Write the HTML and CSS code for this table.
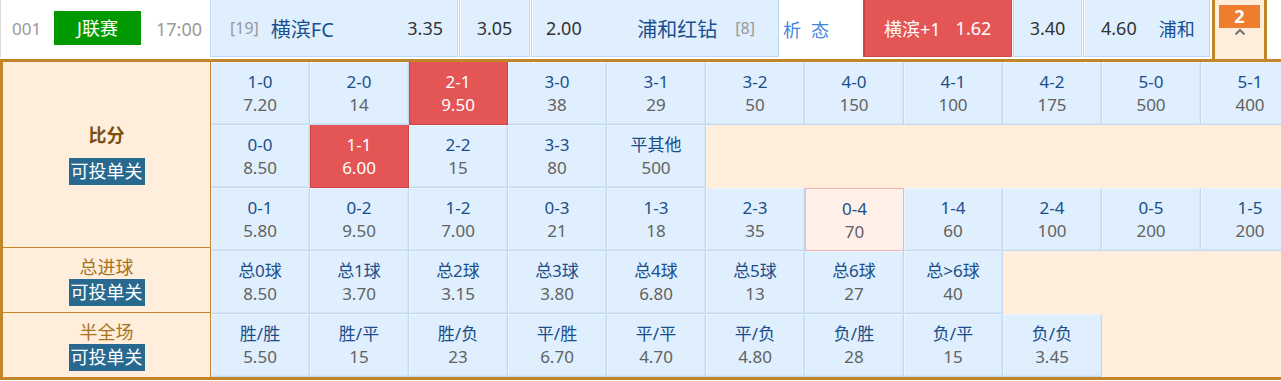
FILE: index.html
```html
<!DOCTYPE html>
<html lang="zh-CN">
<head>
<meta charset="utf-8">
<title>J联赛 横滨FC vs 浦和红钻</title>
<link rel="stylesheet" href="styles.css">
</head>
<body>
<div class="page">
  <div class="head">
    <div class="info">
      <span class="num">001</span>
      <span class="league">J联赛</span>
      <span class="time">17:00</span>
    </div>
    <div class="hc home"><span class="rank">[19]</span><span class="team t-home">横滨FC</span><span class="odd push">3.35</span></div>
    <div class="hc mid"><span class="odd">3.05</span></div>
    <div class="hc away"><span class="odd">2.00</span><span class="team push">浦和红钻</span><span class="rank r-away">[8]</span></div>
    <div class="links"><span class="lk">析</span><span class="lk">态</span></div>
    <div class="hc hred"><span>横滨+1</span><span class="hred-odd">1.62</span></div>
    <div class="hc mid2"><span class="odd">3.40</span></div>
    <div class="hc hlast"><span class="odd">4.60</span><span class="team small">浦和</span></div>
    <div class="toggle">
      <span class="count">2</span>
      <svg class="caret" width="12" height="8" viewBox="0 0 12 8"><polyline points="1.5,6.5 6,2 10.5,6.5" fill="none" stroke="#777" stroke-width="2.2"/></svg>
    </div>
  </div>

  <div class="panel">
    <div class="labels">
      <div class="lab lab-score"><span class="lab-title bold">比分</span><span class="single">可投单关</span></div>
      <div class="lab lab-goals"><span class="lab-title">总进球</span><span class="single">可投单关</span></div>
      <div class="lab lab-half"><span class="lab-title">半全场</span><span class="single">可投单关</span></div>
    </div>
    <div class="rows">
      <div class="row">
        <div class="c"><span class="k">1-0</span><span class="v">7.20</span></div>
        <div class="c"><span class="k">2-0</span><span class="v">14</span></div>
        <div class="c red"><span class="k">2-1</span><span class="v">9.50</span></div>
        <div class="c"><span class="k">3-0</span><span class="v">38</span></div>
        <div class="c"><span class="k">3-1</span><span class="v">29</span></div>
        <div class="c"><span class="k">3-2</span><span class="v">50</span></div>
        <div class="c"><span class="k">4-0</span><span class="v">150</span></div>
        <div class="c"><span class="k">4-1</span><span class="v">100</span></div>
        <div class="c"><span class="k">4-2</span><span class="v">175</span></div>
        <div class="c"><span class="k">5-0</span><span class="v">500</span></div>
        <div class="c"><span class="k">5-1</span><span class="v">400</span></div>
      </div>
      <div class="row">
        <div class="c"><span class="k">0-0</span><span class="v">8.50</span></div>
        <div class="c red"><span class="k">1-1</span><span class="v">6.00</span></div>
        <div class="c"><span class="k">2-2</span><span class="v">15</span></div>
        <div class="c"><span class="k">3-3</span><span class="v">80</span></div>
        <div class="c"><span class="k">平其他</span><span class="v">500</span></div>
      </div>
      <div class="row">
        <div class="c"><span class="k">0-1</span><span class="v">5.80</span></div>
        <div class="c"><span class="k">0-2</span><span class="v">9.50</span></div>
        <div class="c"><span class="k">1-2</span><span class="v">7.00</span></div>
        <div class="c"><span class="k">0-3</span><span class="v">21</span></div>
        <div class="c"><span class="k">1-3</span><span class="v">18</span></div>
        <div class="c"><span class="k">2-3</span><span class="v">35</span></div>
        <div class="c pink"><span class="k">0-4</span><span class="v">70</span></div>
        <div class="c"><span class="k">1-4</span><span class="v">60</span></div>
        <div class="c"><span class="k">2-4</span><span class="v">100</span></div>
        <div class="c"><span class="k">0-5</span><span class="v">200</span></div>
        <div class="c"><span class="k">1-5</span><span class="v">200</span></div>
      </div>
      <div class="row">
        <div class="c"><span class="k">总0球</span><span class="v">8.50</span></div>
        <div class="c"><span class="k">总1球</span><span class="v">3.70</span></div>
        <div class="c"><span class="k">总2球</span><span class="v">3.15</span></div>
        <div class="c"><span class="k">总3球</span><span class="v">3.80</span></div>
        <div class="c"><span class="k">总4球</span><span class="v">6.80</span></div>
        <div class="c"><span class="k">总5球</span><span class="v">13</span></div>
        <div class="c"><span class="k">总6球</span><span class="v">27</span></div>
        <div class="c"><span class="k">总&gt;6球</span><span class="v">40</span></div>
      </div>
      <div class="row">
        <div class="c"><span class="k">胜/胜</span><span class="v">5.50</span></div>
        <div class="c"><span class="k">胜/平</span><span class="v">15</span></div>
        <div class="c"><span class="k">胜/负</span><span class="v">23</span></div>
        <div class="c"><span class="k">平/胜</span><span class="v">6.70</span></div>
        <div class="c"><span class="k">平/平</span><span class="v">4.70</span></div>
        <div class="c"><span class="k">平/负</span><span class="v">4.80</span></div>
        <div class="c"><span class="k">负/胜</span><span class="v">28</span></div>
        <div class="c"><span class="k">负/平</span><span class="v">15</span></div>
        <div class="c"><span class="k">负/负</span><span class="v">3.45</span></div>
      </div>
    </div>
  </div>
</div>
</body>
</html>
```

FILE: styles.css
```css
html, body {
  margin: 0;
  padding: 0;
  background: #fff;
}
body {
  width: 1281px;
  height: 381px;
  overflow: hidden;
  font-family: "Noto Sans", "Noto Sans CJK SC", sans-serif;
}
.page {
  width: 1303px;
}

/* ---------- head row ---------- */
.head {
  display: flex;
  height: 59px;
  align-items: flex-start;
}
.info {
  box-sizing: border-box;
  width: 210px;
  height: 57px;
  border-left: 1px solid #dcdcdc;
  display: flex;
  align-items: center;
  color: #999;
}
.num {
  font-size: 17px;
  margin-left: 11px;
  width: 42px;
}
.league {
  box-sizing: border-box;
  width: 87px;
  height: 34px;
  margin-top: -1px;
  background: #009a00;
  color: #fff;
  font-size: 18px;
  line-height: 34px;
  text-align: center;
}
.time {
  font-size: 18px;
  margin-left: 15px;
}
.hc {
  box-sizing: border-box;
  height: 57px;
  background: #dfeffd;
  border: 1px solid #bdd6f1;
  border-top: none;
  display: flex;
  align-items: center;
  color: #333;
  box-shadow: inset 1px 0 0 #eef7ff;
}
.odd {
  font-size: 18px;
}
.team {
  font-size: 20px;
  color: #1a4f8f;
}
.team.small {
  font-size: 18px;
  margin-left: 22px;
}
.rank {
  font-size: 16px;
  color: #999;
}
.push {
  margin-left: auto;
}
.home {
  width: 248px;
  padding: 0 14px 0 19px;
  margin-right: 1px;
}
.t-home {
  margin-left: 12px;
}
.mid {
  width: 71px;
  justify-content: center;
  margin-right: 1px;
}
.away {
  width: 248px;
  padding: 0 23px 0 14px;
}
.r-away {
  margin-left: 18px;
}
.links {
  width: 84px;
  height: 57px;
  display: flex;
  align-items: center;
  padding-left: 4px;
  box-sizing: border-box;
  color: #3f86dc;
  font-size: 18px;
}
.lk + .lk {
  margin-left: 10px;
}
.hred {
  width: 149px;
  background: #e45656;
  border-color: #d24a4a;
  color: #fff;
  font-size: 18px;
  padding-left: 20px;
  margin-right: 1px;
  box-shadow: inset 1px 0 0 #c94040;
}
.hred-odd {
  margin-left: 15px;
}
.mid2 {
  width: 69px;
  justify-content: center;
  margin-right: 1px;
}
.hlast {
  width: 127px;
  padding-left: 17px;
  margin-right: 2px;
}
.toggle {
  box-sizing: border-box;
  width: 55px;
  height: 59px;
  background: #ffeedc;
  border-left: 3px solid #c2852a;
  border-right: 3px solid #c2852a;
  display: flex;
  flex-direction: column;
  align-items: center;
  padding-top: 5px;
}
.count {
  width: 41px;
  height: 23px;
  background: #ee7d30;
  color: #fff;
  font-weight: bold;
  font-size: 18px;
  line-height: 23px;
  text-align: center;
}
.caret {
  display: block;
  margin-top: 0;
}

/* ---------- panel ---------- */
.panel {
  display: flex;
  border: 3px solid #c2852a;
  border-right: none;
  background: #ffeedc;
}
.labels {
  width: 208px;
  display: flex;
  flex-direction: column;
}
.lab {
  box-sizing: border-box;
  border-right: 1px solid #c2852a;
  display: flex;
  flex-direction: column;
  align-items: center;
  justify-content: center;
  color: #a8731f;
  font-size: 18px;
}
.lab-score {
  height: 186px;
  border-bottom: 1px solid #c2852a;
}
.lab-goals {
  height: 65px;
  border-bottom: 1px solid #c2852a;
}
.lab-half {
  height: 64px;
}
.lab-title {
  line-height: 24px;
}
.lab-title.bold {
  font-weight: bold;
  font-size: 18px;
  color: #7b4e12;
  margin-bottom: 11px;
}
.single {
  background: #27698f;
  color: #fff;
  font-size: 18px;
  height: 27px;
  line-height: 27px;
  padding: 0 2px;
}
.lab-score .single {
  margin-bottom: 2px;
}

.rows {
  display: flex;
  flex-direction: column;
}
.row {
  display: flex;
  height: 63px;
}
.c {
  box-sizing: border-box;
  width: 99px;
  height: 63px;
  background: #dfeffd;
  border-right: 1px solid #c3d9f2;
  border-bottom: 1px solid #c3d9f2;
  box-shadow: inset 1px 1px 0 #ebf5ff, inset -1px -1px 1px #d3e6f9;
  display: flex;
  flex-direction: column;
  align-items: center;
  justify-content: center;
  font-size: 17px;
  line-height: 23px;
}
.k {
  color: #1b4e8b;
}
.v {
  color: #626262;
}
.c.red {
  background: #e45555;
  border-color: #cf4343;
  box-shadow: inset 1px 0 0 #d04444;
}
.c.red .k, .c.red .v {
  color: #fff;
}
.c.pink {
  background: #fff0ea;
  border: 1px solid #f3b2b2;
  box-shadow: none;
}
```
